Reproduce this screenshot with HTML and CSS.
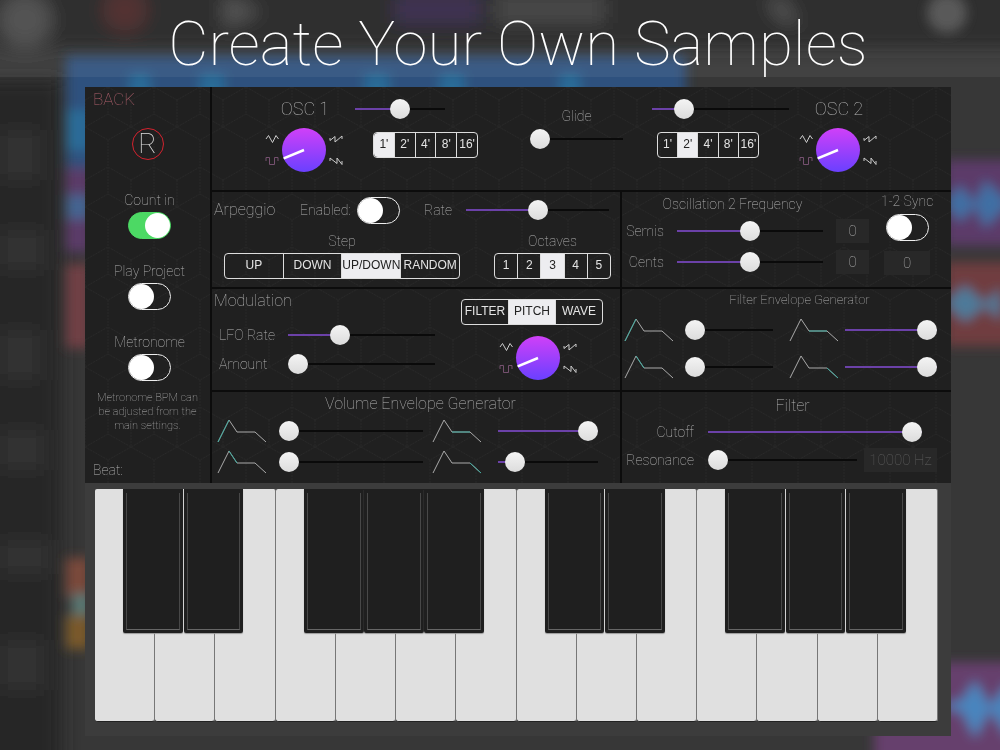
FILE: index.html
```html
<!DOCTYPE html>
<html lang="en">
<head>
  <meta charset="UTF-8">
  <meta name="viewport" content="width=device-width, initial-scale=1">
  <title>Create Your Own Samples</title>
  <link rel="stylesheet" href="styles.css">
</head>
<body>
  <svg class="symbols" aria-hidden="true">
    <symbol id="env" viewBox="0 0 50 26"><path d="M1 24 L12 2 L20 14 L38 14 L49 24"/></symbol>
    <symbol id="triangle" viewBox="0 0 14 10"><path d="M1 5 L3.5 1.5 L7.5 8.5 L11 1.5 L13.5 5"/></symbol>
    <symbol id="square" viewBox="0 0 14 10"><path d="M1 5 V1.5 H4.5 V8.5 H9.5 V1.5 H13 V5"/></symbol>
    <symbol id="saw" viewBox="0 0 14 10"><path d="M1 4 V6.5 L6 2.5 V8 L13 2 V5"/></symbol>
    <symbol id="ramp" viewBox="0 0 14 10"><path d="M1 5 V2 L8 7.5 V2 L13 8.5 V5"/></symbol>
  </svg>

  <!-- blurred project screen behind the synth -->
  <svg class="backdrop" viewBox="0 0 1000 750" preserveAspectRatio="none" aria-hidden="true">
    <defs>
      <filter id="soft" x="-30%" y="-30%" width="160%" height="160%"><feGaussianBlur stdDeviation="9"/></filter>
      <filter id="edge" x="-30%" y="-30%" width="160%" height="160%"><feGaussianBlur stdDeviation="6"/></filter>
    </defs>
    <rect width="1000" height="750" fill="#373737"/>
    <g filter="url(#soft)">
      <rect x="-30" y="-30" width="1060" height="78" fill="#202020"/>
      <rect x="-30" y="80" width="92" height="720" fill="#262626"/>
      <g fill="#303030">
        <rect x="0" y="130" width="40" height="50"/>
        <rect x="0" y="230" width="44" height="40"/>
        <rect x="0" y="330" width="40" height="50"/>
        <rect x="0" y="430" width="44" height="40"/>
        <rect x="0" y="540" width="50" height="34"/>
        <rect x="0" y="640" width="44" height="50"/>
      </g>
      <circle cx="25" cy="20" r="27" fill="#484848"/>
      <circle cx="125" cy="10" r="22" fill="#4a2828"/>
      <path d="M224 -6 L262 12 L224 28 Z" fill="#4c4c4c"/>
      <rect x="395" y="-5" width="85" height="28" fill="#35284a"/>
      <rect x="495" y="-5" width="110" height="28" fill="#3c3c3c"/>
      <path d="M765 0 L785 0 L800 26 L780 20 Z" fill="#4c4c4c"/>
    </g>
    <g filter="url(#edge)">
      <circle cx="947" cy="13" r="20" fill="#505050"/>
      <rect x="66" y="56" width="620" height="112" fill="#2d517e"/>
      <g fill="#2a6c98">
        <rect x="130" y="74" width="20" height="30"/>
        <rect x="200" y="74" width="24" height="30"/>
        <rect x="365" y="74" width="24" height="30"/>
        <rect x="440" y="74" width="24" height="30"/>
        <rect x="560" y="74" width="20" height="30"/>
        <rect x="66" y="110" width="24" height="40"/>
      </g>
      <rect x="66" y="168" width="24" height="84" fill="#5c3b69"/>
      <rect x="66" y="195" width="24" height="24" fill="#456593"/>
      <rect x="66" y="264" width="24" height="84" fill="#713f45"/>
      <rect x="66" y="558" width="24" height="40" fill="#7a4a3a"/>
      <rect x="72" y="594" width="18" height="22" fill="#5a7a76"/>
      <rect x="66" y="615" width="24" height="34" fill="#7a5a2b"/>
      <rect x="945" y="160" width="70" height="86" fill="#5c3b69"/>
      <path d="M945 203 L960 185 L975 203 L985 180 L1010 203 L985 228 L975 206 L960 222 Z" fill="#4070a4"/>
      <rect x="945" y="262" width="70" height="84" fill="#703c3f"/>
      <path d="M945 303 L965 285 L985 303 L1000 288 V320 L985 306 L965 322 Z" fill="#4e7a9a"/>
      <rect x="874" y="662" width="140" height="100" fill="#66406d"/>
      <path d="M940 706 L962 700 L975 680 L990 706 L1010 680 V740 L990 710 L975 738 L962 712 Z" fill="#4985be"/>
    </g>
  </svg>

  <header class="banner">
    <h1>Create Your Own Samples</h1>
  </header>

  <main class="synth">
    <div class="controls">
      <svg class="texture" aria-hidden="true">
        <defs>
          <pattern id="hex" width="46" height="80" patternUnits="userSpaceOnUse">
            <path d="M0 13 L23 0 L46 13 M0 13 V40 L23 53 L46 40 V13 M23 53 V80 M23 0 V27 L0 40 M23 27 L46 40"/>
          </pattern>
        </defs>
        <rect width="100%" height="100%" fill="url(#hex)"/>
      </svg>

      <aside class="sidebar">
        <a class="back" href="#">BACK</a>
        <button class="record" type="button">R</button>
        <label class="switch-row count-in">Count in <input class="switch" type="checkbox" checked></label>
        <label class="switch-row">Play Project <input class="switch" type="checkbox"></label>
        <label class="switch-row">Metronome <input class="switch" type="checkbox"></label>
        <p class="note">Metronome BPM can be adjusted from the main settings.</p>
        <p class="beat">Beat:</p>
      </aside>

      <div class="modules">
        <section class="module oscillators">
          <div class="osc">
            <h2>OSC 1</h2>
            <div class="knob" role="slider" tabindex="0" aria-label="OSC 1 wave" aria-valuemin="0" aria-valuemax="3" aria-valuenow="0">
              <svg class="wave"><use href="#triangle"/></svg>
              <svg class="wave"><use href="#saw"/></svg>
              <svg class="wave on"><use href="#square"/></svg>
              <svg class="wave"><use href="#ramp"/></svg>
              <svg class="dial" viewBox="0 0 44 44"><path d="M22 22 L0 31"/></svg>
            </div>
          </div>
          <div class="tuning tuning-one">
            <input class="slider" type="range" value="50" aria-label="OSC 1 level">
            <fieldset class="segments feet">
              <label><input type="radio" name="feet1" checked>1'</label>
              <label><input type="radio" name="feet1">2'</label>
              <label><input type="radio" name="feet1">4'</label>
              <label><input type="radio" name="feet1">8'</label>
              <label><input type="radio" name="feet1">16'</label>
            </fieldset>
          </div>
          <div class="glide">
            <label for="glide">Glide</label>
            <input class="slider" id="glide" type="range" value="0">
          </div>
          <div class="tuning tuning-two">
            <input class="slider" type="range" value="19" aria-label="OSC 2 level">
            <fieldset class="segments feet">
              <label><input type="radio" name="feet2">1'</label>
              <label><input type="radio" name="feet2" checked>2'</label>
              <label><input type="radio" name="feet2">4'</label>
              <label><input type="radio" name="feet2">8'</label>
              <label><input type="radio" name="feet2">16'</label>
            </fieldset>
          </div>
          <div class="osc">
            <h2>OSC 2</h2>
            <div class="knob" role="slider" tabindex="0" aria-label="OSC 2 wave" aria-valuemin="0" aria-valuemax="3" aria-valuenow="0">
              <svg class="wave"><use href="#triangle"/></svg>
              <svg class="wave"><use href="#saw"/></svg>
              <svg class="wave on"><use href="#square"/></svg>
              <svg class="wave"><use href="#ramp"/></svg>
              <svg class="dial" viewBox="0 0 44 44"><path d="M22 22 L0 31"/></svg>
            </div>
          </div>
        </section>

        <section class="module arpeggio">
          <div class="arp-top">
            <h2>Arpeggio</h2>
            <label for="arp-on">Enabled:</label>
            <input class="switch" id="arp-on" type="checkbox">
            <label for="arp-rate">Rate</label>
            <input class="slider" id="arp-rate" type="range" value="50">
          </div>
          <div class="arp-bottom">
            <fieldset class="choice">
              <legend>Step</legend>
              <div class="segments step">
                <label><input type="radio" name="step">UP</label>
                <label><input type="radio" name="step">DOWN</label>
                <label><input type="radio" name="step" checked>UP/DOWN</label>
                <label><input type="radio" name="step">RANDOM</label>
              </div>
            </fieldset>
            <fieldset class="choice">
              <legend>Octaves</legend>
              <div class="segments octaves">
                <label><input type="radio" name="oct">1</label>
                <label><input type="radio" name="oct">2</label>
                <label><input type="radio" name="oct" checked>3</label>
                <label><input type="radio" name="oct">4</label>
                <label><input type="radio" name="oct">5</label>
              </div>
            </fieldset>
          </div>
        </section>

        <section class="module frequency">
          <div class="freq-main">
            <h3>Oscillation 2 Frequency</h3>
            <label for="semis">Semis</label>
            <input class="slider" id="semis" type="range" value="50">
            <input class="readout" type="text" value="0" aria-label="Semis value">
            <label for="cents">Cents</label>
            <input class="slider" id="cents" type="range" value="50">
            <input class="readout" type="text" value="0" aria-label="Cents value">
          </div>
          <div class="sync">
            <label for="sync">1-2 Sync</label>
            <input class="switch" id="sync" type="checkbox">
            <input class="readout" type="text" value="0" aria-label="Sync value">
          </div>
        </section>

        <section class="module modulation">
          <div class="mod-main">
            <h2>Modulation</h2>
            <label for="lfo">LFO Rate</label>
            <input class="slider" id="lfo" type="range" value="33">
            <label for="amount">Amount</label>
            <input class="slider" id="amount" type="range" value="0">
          </div>
          <div class="mod-target">
            <fieldset class="segments target">
              <label><input type="radio" name="target">FILTER</label>
              <label><input type="radio" name="target" checked>PITCH</label>
              <label><input type="radio" name="target">WAVE</label>
            </fieldset>
            <div class="knob" role="slider" tabindex="0" aria-label="LFO wave" aria-valuemin="0" aria-valuemax="3" aria-valuenow="0">
              <svg class="wave"><use href="#triangle"/></svg>
              <svg class="wave"><use href="#saw"/></svg>
              <svg class="wave on"><use href="#square"/></svg>
              <svg class="wave"><use href="#ramp"/></svg>
              <svg class="dial" viewBox="0 0 44 44"><path d="M22 22 L0 31"/></svg>
            </div>
          </div>
        </section>

        <section class="module envelope filter-env">
          <h3>Filter Envelope Generator</h3>
          <svg class="env"><use href="#env"/><path d="M1 24 L12 2"/></svg>
          <input class="slider" type="range" value="0" aria-label="Filter attack">
          <svg class="env"><use href="#env"/><path d="M20 14 H38"/></svg>
          <input class="slider" type="range" value="100" aria-label="Filter sustain">
          <svg class="env"><use href="#env"/><path d="M12 2 L20 14"/></svg>
          <input class="slider" type="range" value="0" aria-label="Filter decay">
          <svg class="env"><use href="#env"/><path d="M38 14 L49 24"/></svg>
          <input class="slider" type="range" value="100" aria-label="Filter release">
        </section>

        <section class="module envelope volume-env">
          <h3>Volume Envelope Generator</h3>
          <svg class="env"><use href="#env"/><path d="M1 24 L12 2"/></svg>
          <input class="slider" type="range" value="0" aria-label="Volume attack">
          <svg class="env"><use href="#env"/><path d="M20 14 H38"/></svg>
          <input class="slider" type="range" value="100" aria-label="Volume sustain">
          <svg class="env"><use href="#env"/><path d="M12 2 L20 14"/></svg>
          <input class="slider" type="range" value="0" aria-label="Volume decay">
          <svg class="env"><use href="#env"/><path d="M38 14 L49 24"/></svg>
          <input class="slider" type="range" value="9" aria-label="Volume release">
        </section>

        <section class="module filter">
          <h3>Filter</h3>
          <label for="cutoff">Cutoff</label>
          <input class="slider cutoff" id="cutoff" type="range" value="100">
          <label for="resonance">Resonance</label>
          <input class="slider" id="resonance" type="range" value="0">
          <input class="readout hertz" type="text" value="10000 Hz" aria-label="Cutoff frequency">
        </section>
      </div>
    </div>

    <ul class="keyboard">
      <li><button class="white" aria-label="C3"></button><button class="black" aria-label="C#3"></button></li>
      <li><button class="white" aria-label="D3"></button><button class="black" aria-label="D#3"></button></li>
      <li><button class="white" aria-label="E3"></button></li>
      <li><button class="white" aria-label="F3"></button><button class="black" aria-label="F#3"></button></li>
      <li><button class="white" aria-label="G3"></button><button class="black" aria-label="G#3"></button></li>
      <li><button class="white" aria-label="A3"></button><button class="black" aria-label="A#3"></button></li>
      <li><button class="white" aria-label="B3"></button></li>
      <li><button class="white" aria-label="C4"></button><button class="black" aria-label="C#4"></button></li>
      <li><button class="white" aria-label="D4"></button><button class="black" aria-label="D#4"></button></li>
      <li><button class="white" aria-label="E4"></button></li>
      <li><button class="white" aria-label="F4"></button><button class="black" aria-label="F#4"></button></li>
      <li><button class="white" aria-label="G4"></button><button class="black" aria-label="G#4"></button></li>
      <li><button class="white" aria-label="A4"></button><button class="black" aria-label="A#4"></button></li>
      <li><button class="white" aria-label="B4"></button></li>
    </ul>
  </main>

  <script src="script.js"></script>
</body>
</html>
```

FILE: styles.css
```css
* {
  margin: 0;
  padding: 0;
  box-sizing: border-box;
}

body {
  display: flex;
  flex-direction: column;
  min-height: 100vh;
  background: #373737;
  color: #b4b4b4;
  font-family: Roboto, Inter, sans-serif;
  font-size: 14px;
  font-weight: 100;
  line-height: 18px;
}

.symbols {
  position: absolute;
  width: 0;
  height: 0;
}

.backdrop {
  position: fixed;
  inset: 0;
  width: 100%;
  height: 100%;
  z-index: -1;
}

.banner {
  height: 77px;
  margin-bottom: 10px;
  background: rgba(255, 255, 255, 0.06);
  text-align: center;
}

.banner h1 {
  padding-left: 36px;
  color: white;
  font-size: 62px;
  font-weight: 100;
  line-height: 88px;
  white-space: nowrap;
}

h2, h3 {
  font-weight: 100;
}

h2 {
  font-size: 17px;
  line-height: 20px;
}

h3 {
  font-size: 14px;
  line-height: 20px;
  text-align: center;
}

fieldset {
  border: none;
  min-width: 0;
}

.synth {
  flex: 1;
  display: flex;
  flex-direction: column;
  margin: 0 49px 14px 85px;
  background: #3c3c3c;
}

.controls {
  position: relative;
  display: flex;
  background: #202020;
}

.texture {
  position: absolute;
  inset: 0;
  width: 100%;
  height: 100%;
}

.texture path {
  fill: none;
  stroke: #282828;
  stroke-dasharray: 2 1;
}

/* sidebar */
.sidebar {
  position: relative;
  width: 125px;
  display: flex;
  flex-direction: column;
  align-items: center;
  padding: 3px 0 4px;
}

.back {
  align-self: flex-start;
  padding-left: 8px;
  color: #b0606c;
  font-size: 17px;
  text-decoration: none;
}

.record {
  width: 32px;
  height: 32px;
  margin-top: 20px;
  border: 1px solid #d3222e;
  border-radius: 50%;
  background: none;
  color: #ddd;
  font: 100 28px/28px Roboto, sans-serif;
}

.switch-row {
  display: flex;
  flex-direction: column;
  align-items: center;
  gap: 3px;
  margin-top: 23px;
  padding-left: 4px;
}

.count-in {
  margin-top: 31px;
}

.note {
  margin-top: 10px;
  padding: 0 8px;
  font-size: 11px;
  line-height: 14px;
  text-align: center;
}

.beat {
  align-self: flex-start;
  margin-top: auto;
  padding-left: 8px;
}

/* module grid */
.modules {
  position: relative;
  flex: 1;
  display: grid;
  grid-template-columns: 410px 1fr;
  grid-template-rows: 105px 97px 103px 91px;
}

.module {
  border-left: 2px solid #0c0c0c;
  border-bottom: 2px solid #0c0c0c;
}

.volume-env, .filter {
  border-bottom: none;
}

/* slider */
.slider {
  appearance: none;
  width: 100%;
  height: 20px;
  background: linear-gradient(to right, #6b41a8 var(--fill, 0%), #0a0a0a var(--fill, 0%)) center / 100% 2px no-repeat;
}

.slider::-webkit-slider-thumb {
  appearance: none;
  width: 20px;
  height: 20px;
  border-radius: 50%;
  background: linear-gradient(#f4f4f4, #dcdcdc);
}

/* switch */
.switch {
  appearance: none;
  width: 43px;
  height: 27px;
  border: 1px solid #eee;
  border-radius: 14px;
}

.switch::before {
  content: "";
  display: block;
  width: 25px;
  height: 25px;
  border-radius: 50%;
  background: white;
}

.switch:checked {
  border-color: #4cd964;
  background: #4cd964;
}

.switch:checked::before {
  margin-left: 16px;
}

/* segmented control */
.segments {
  display: flex;
  height: 26px;
  border: 1px solid #ddd;
  border-radius: 4px;
  overflow: hidden;
  color: #e4e4e4;
  font: 12px/23px "Liberation Sans", Arial, sans-serif;
}

.segments label {
  flex: 1 1 0;
  text-align: center;
  white-space: nowrap;
}

.segments label + label {
  border-left: 1px solid #ddd;
}

.segments label:has(:checked) {
  background: #ededf0;
  color: #222;
}

.segments input {
  position: absolute;
  appearance: none;
}

/* numeric box */
.readout {
  width: 100%;
  height: 24px;
  border: none;
  background: #282828;
  color: #b4b4b4;
  font: 100 15px/20px Roboto, sans-serif;
  text-align: center;
}

/* knob with the four wave shapes */
.knob {
  display: grid;
  grid-template-columns: 14px 44px 14px;
  grid-template-rows: 22px 22px;
  justify-content: space-between;
  align-items: center;
  width: 78px;
}

.wave {
  width: 14px;
  height: 10px;
  fill: none;
  stroke: #ccc;
}

.wave:nth-child(2n) {
  grid-column: 3;
}

.wave.on {
  stroke: #75506f;
}

.dial {
  grid-column: 2;
  grid-row: 1 / 3;
  width: 44px;
  height: 44px;
  border-radius: 50%;
  background: linear-gradient(#d040f8, #6a40ff);
  fill: none;
  stroke: white;
  stroke-width: 2.5;
}

/* oscillators */
.oscillators {
  grid-column: 1 / 3;
  display: grid;
  grid-template-columns: 80px 123px 1fr 137px 80px;
  column-gap: 10px;
  padding: 12px 72px 0 53px;
}

.osc {
  display: flex;
  flex-direction: column;
  gap: 9px;
  text-align: center;
}

.osc h2 {
  font-size: 18px;
}

.tuning {
  display: flex;
  flex-direction: column;
  gap: 13px;
}

.tuning-one .slider {
  width: 90px;
}

.feet {
  width: 105px;
}

.tuning-one .feet {
  align-self: flex-end;
}

.tuning-two .feet {
  width: 102px;
  margin-left: 5px;
}

.glide {
  display: flex;
  flex-direction: column;
  gap: 4px;
  padding: 8px 19px 0 42px;
  text-align: center;
}

/* arpeggio */
.arp-top {
  display: grid;
  grid-template-columns: 86px 57px 67px 42px 1fr;
  align-items: center;
  height: 36px;
  padding: 0 11px 0 2px;
}

.arp-top h2 {
  font-size: 16px;
}

.arp-bottom {
  display: flex;
  justify-content: space-between;
  padding: 4px 9px 0 12px;
}

.choice legend {
  margin: 0 auto;
  padding-bottom: 3px;
}

.step {
  width: 236px;
}

.octaves {
  width: 117px;
}

/* oscillation 2 frequency */
.frequency {
  display: flex;
  justify-content: space-between;
  padding-right: 16px;
}

.freq-main {
  display: grid;
  grid-template-columns: 42px 146px 33px;
  grid-template-rows: 24px 30px 32px;
  align-items: center;
  column-gap: 13px;
}

.freq-main h3 {
  grid-column: 1 / 4;
  padding-right: 26px;
}

.freq-main label,
.filter label {
  text-align: right;
}

.sync {
  display: flex;
  flex-direction: column;
  align-items: center;
  gap: 4px;
  width: 56px;
  white-space: nowrap;
}

.sync .readout {
  width: 46px;
  margin-top: 6px;
}

/* modulation */
.modulation {
  display: flex;
  justify-content: space-between;
  padding: 2px 17px 0 2px;
}

.mod-main {
  display: grid;
  grid-template-columns: 74px 147px;
  grid-template-rows: 30px 28px 30px;
  align-items: center;
}

.mod-main h2 {
  grid-column: 1 / 3;
  align-self: start;
  font-size: 16px;
}

.mod-main label {
  padding-left: 5px;
}

.mod-target {
  display: flex;
  flex-direction: column;
  align-items: center;
  gap: 11px;
  padding-top: 8px;
}

.mod-target .knob {
  margin-left: 12px;
}

.target {
  width: 142px;
}

/* envelopes */
.envelope {
  display: grid;
  align-items: center;
}

.envelope h3 {
  grid-column: 1 / 5;
}

.env {
  width: 50px;
  height: 26px;
  fill: none;
  stroke: #aaa;
}

.env path {
  stroke: #3fa79c;
}

.filter-env {
  grid-template-columns: 61px 104px 56px 92px;
  grid-template-rows: 22px 38px 36px;
  padding-left: 2px;
}

.filter-env .env + .slider {
  width: 88px;
}

.filter-env .env + .slider:nth-child(4n + 1) {
  width: 92px;
}

.filter-env h3 {
  padding-left: 38px;
  font-size: 13px;
}

.volume-env {
  grid-template-columns: 62px 153px 66px 100px;
  grid-template-rows: 24px 30px 32px;
  padding-left: 5px;
}

.volume-env .env + .slider {
  width: 144px;
}

.volume-env .env + .slider:nth-child(4n + 1) {
  width: 100px;
}

.volume-env h3 {
  padding-left: 26px;
  font-size: 16px;
}

/* filter */
.filter {
  display: grid;
  grid-template-columns: 79px 149px 73px;
  grid-template-rows: 28px 24px 32px;
  align-items: center;
  column-gap: 7px;
}

.filter h3 {
  grid-column: 1 / 4;
  padding-left: 26px;
  font-size: 16px;
}

.filter label {
  padding-right: 7px;
}

.filter .cutoff {
  grid-column: 2 / 4;
  width: 214px;
}

.filter .hertz {
  color: #606060;
}

/* keyboard */
.keyboard {
  flex: 1;
  display: flex;
  min-height: 200px;
  padding: 6px 13px 14px 10px;
  list-style: none;
}

.keyboard li {
  position: relative;
  flex: 1;
}

.white {
  display: block;
  width: 100%;
  height: 100%;
  border: none;
  border-right: 1px solid #777;
  border-bottom: 1px solid #222;
  border-radius: 2px 2px 3px 3px;
  background: #e0e0e0;
}

/* black keys lie over the gap between two white ones */
.black {
  position: absolute;
  z-index: 1;
  top: 0;
  left: 47%;
  width: 99%;
  height: 62%;
  padding: 4px 3px;
  border: none;
  border-radius: 0 0 2px 2px;
  background: #1f1f1f;
  box-shadow: 0 1px 1px #999;
}

.black::before {
  content: "";
  display: block;
  height: 100%;
  border: 1px solid #484848;
  border-top: none;
  border-bottom-color: #666;
}
```

FILE: script.js
```js
// colour the part of each track left of its thumb
document.querySelectorAll('.slider').forEach(slider => {
  const paint = () => slider.style.setProperty('--fill', slider.value + '%');
  slider.addEventListener('input', paint);
  paint();
});
```
